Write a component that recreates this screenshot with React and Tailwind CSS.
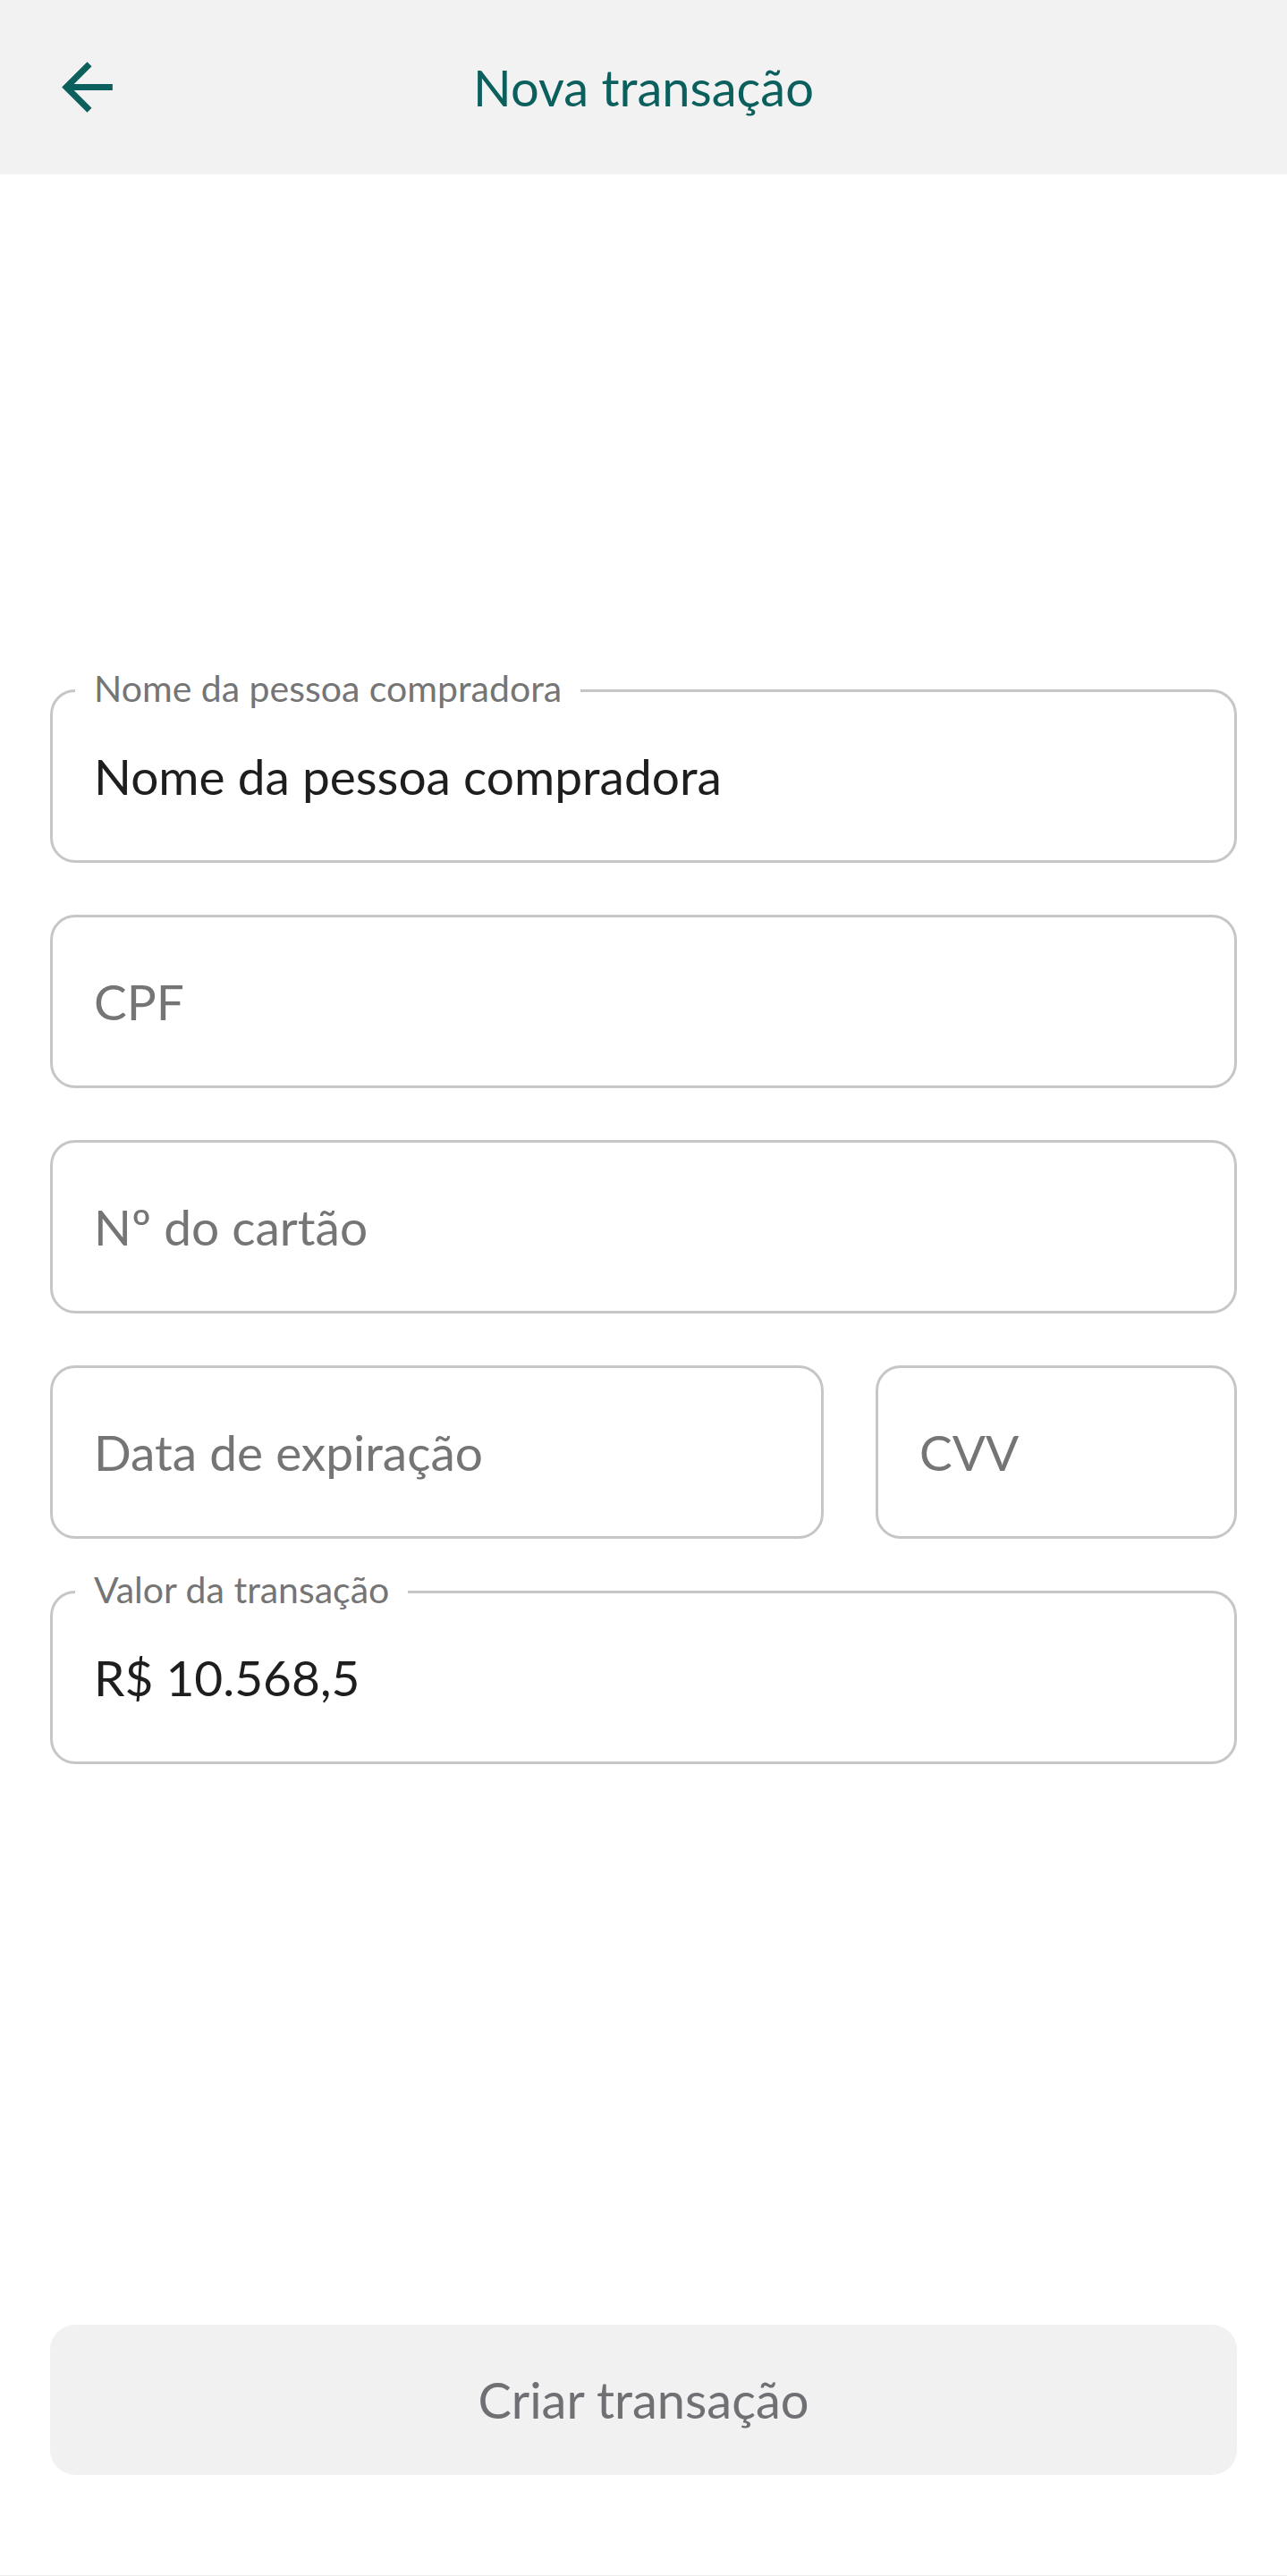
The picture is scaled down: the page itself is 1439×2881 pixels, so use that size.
const fields = [
    { key: 'nome', label: 'Nome da pessoa compradora', value: 'Nome da pessoa compradora' },
    { key: 'cpf', placeholder: 'CPF' },
    { key: 'cartao', placeholder: 'Nº do cartão' },
];

function Field({ label, value, placeholder, className = '' }) {
    return (
        <div className={`relative h-[194px] rounded-[28px] border-[3px] border-[#c6c6c6] flex items-center px-[46px] ${className}`}>
            {label && (
                <span className="absolute top-[-25px] left-[25px] px-[21px] bg-white text-[41px] leading-[41px] text-[#757575]">
                    {label}
                </span>
            )}
            {value
                ? <span className="text-[55px] text-[#1e1e1e]">{value}</span>
                : <span className="text-[55px] text-[#757575]">{placeholder}</span>}
        </div>
    );
}

export default function App() {
    return (
        <div className="min-h-[2881px] flex flex-col bg-white font-['Lato','Liberation_Sans',sans-serif]">
            {/* barra superior */}
            <header className="h-[195px] bg-[#f2f2f2] grid grid-cols-[1fr_auto_1fr] items-center px-[55px]">
                <svg viewBox="0 0 24 24" className="w-[85px] h-[85px] fill-[#0b5f5c]">
                    <path d="M20 11H7.83l5.59-5.59L12 4l-8 8 8 8 1.41-1.41L7.83 13H20v-2z" />
                </svg>
                <h1 className="text-[56px] text-[#0b5f5c] font-normal">Nova transação</h1>
                <div />
            </header>

            <main className="flex-1 flex flex-col px-[56px]">
                <div className="mt-[576px] flex flex-col gap-[58px]">
                    {fields.map(f => <Field key={f.key} {...f} />)}
                    <div className="flex gap-[58px]">
                        <Field placeholder="Data de expiração" className="flex-1" />
                        <Field placeholder="CVV" className="w-[404px]" />
                    </div>
                    <Field label="Valor da transação" value="R$ 10.568,5" />
                </div>

                <button className="mt-auto mb-[112px] h-[168px] rounded-[28px] bg-[#f1f1f1] text-[56px] text-[#6f6f74]">
                    Criar transação
                </button>
            </main>
            <div className="h-px bg-[#ededed]" />
        </div>
    );
}
